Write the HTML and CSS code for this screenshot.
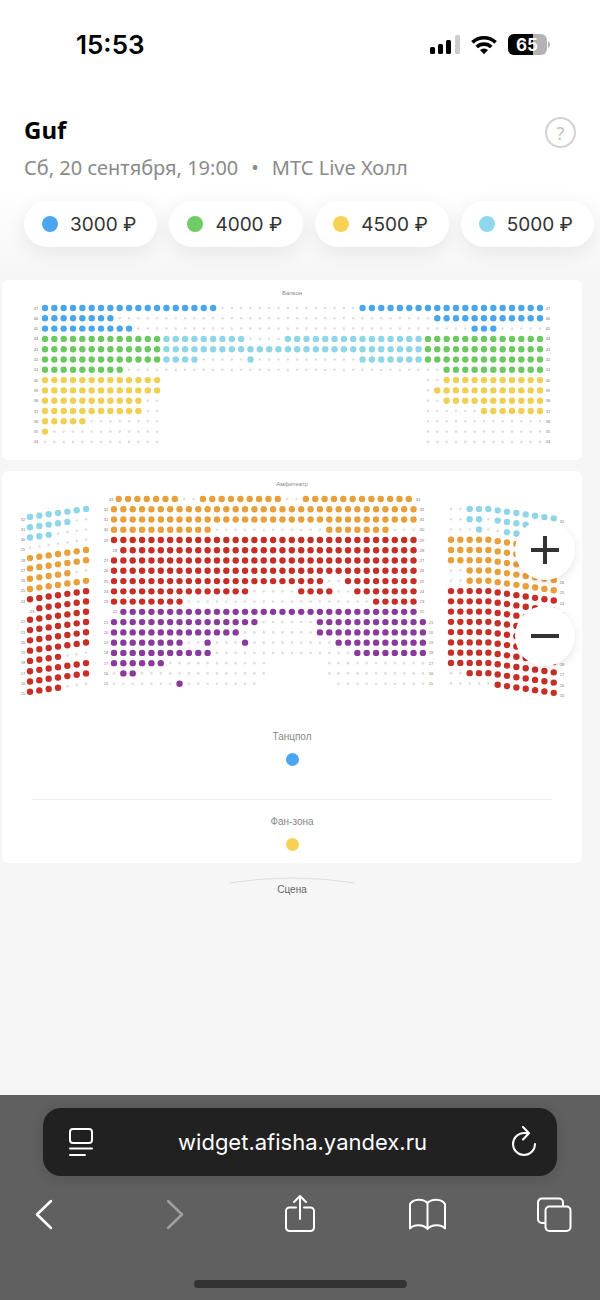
FILE: index.html
```html
<!DOCTYPE html>
<html lang="ru">
<head>
    <meta charset="UTF-8">
    <meta name="viewport" content="width=device-width, initial-scale=1.0">
    <title>Guf — МТС Live Холл</title>
    <link rel="stylesheet" href="styles.css">
</head>
<body>
    <!-- Строка состояния -->
    <div class="status-bar">
        <span class="status-time">15:53</span>
        <div class="status-icons">
            <svg width="30" height="20" viewBox="0 0 30 20" aria-hidden="true">
                <rect x="0" y="12" width="5" height="7" rx="1.5"/>
                <rect x="8" y="9" width="5" height="10" rx="1.5"/>
                <rect x="16" y="5" width="5" height="14" rx="1.5"/>
                <rect x="25" y="0" width="5" height="19" rx="1.5" fill="#ccc"/>
            </svg>
            <svg width="26" height="20" viewBox="0 0 26 20" aria-hidden="true">
                <g fill="none" stroke="#000" stroke-width="3.6">
                    <path d="M1.4 7.4a16.8 16.8 0 0 1 23.2 0"/>
                    <path d="M5.7 12a10.6 10.6 0 0 1 14.6 0"/>
                </g>
                <path d="M13 19.2l-4-4.1a5.8 5.8 0 0 1 8 0z"/>
            </svg>
            <svg width="42" height="22" viewBox="0 0 42 22" role="img" aria-label="Заряд 65%">
                <rect x="0" y="0" width="39" height="21" rx="6" fill="#b3b3b3"/>
                <path d="M6 0h19v21H6a6 6 0 0 1-6-6V6a6 6 0 0 1 6-6z"/>
                <path d="M40 7q2 1.200 2 3.500t-2 3.500z" fill="#b3b3b3"/>
                <text class="battery-text" x="19" y="17" text-anchor="middle">65</text>
            </svg>
        </div>
    </div>

    <!-- Шапка события -->
    <header class="event">
        <div class="event-top">
            <h1>Guf</h1>
            <button class="help-button" type="button" aria-label="Помощь">?</button>
        </div>
        <p class="event-info">Сб, 20 сентября, 19:00<span class="separator">•</span>МТС Live Холл</p>
        <div class="prices">
            <button class="price" type="button"><span class="dot blue"></span>3000 ₽</button>
            <button class="price" type="button"><span class="dot green"></span>4000 ₽</button>
            <button class="price" type="button"><span class="dot yellow"></span>4500 ₽</button>
            <button class="price" type="button"><span class="dot cyan"></span>5000 ₽</button>
        </div>
    </header>

    <!-- Схема зала -->
    <main class="hall">
        <section class="sector">
            <h2>Балкон</h2>
            <svg class="seats" id="balcony" viewBox="0 0 580 162"></svg>
        </section>

        <section class="sector">
            <h2>Амфитеатр</h2>
            <svg class="seats" id="amphitheatre" viewBox="0 0 580 212"></svg>
            <div class="zone dance-floor">
                <h3>Танцпол</h3>
                <span class="zone-dot blue"></span>
            </div>
            <div class="zone fan-zone">
                <h3>Фан-зона</h3>
                <span class="zone-dot yellow"></span>
            </div>
        </section>

        <div class="stage">
            <svg width="128" height="7" viewBox="0 0 128 7" aria-hidden="true">
                <path d="M1 6Q64 -4 127 6" fill="none" stroke="#ddd"/>
            </svg>
            <span>Сцена</span>
        </div>

        <div class="zoom">
            <button type="button" aria-label="Приблизить">
                <svg width="28" height="28" viewBox="0 0 28 28"><path d="M14 0v28M0 14h28"/></svg>
            </button>
            <button type="button" aria-label="Отдалить">
                <svg width="28" height="28" viewBox="0 0 28 28"><path d="M0 14h28"/></svg>
            </button>
        </div>
    </main>

    <!-- Панель браузера -->
    <footer class="browser">
        <div class="address">
            <button type="button" aria-label="Настройки страницы">
                <svg width="26" height="30" viewBox="0 0 26 30">
                    <rect x="2" y="2" width="22" height="14" rx="3"/>
                    <path d="M2 21.500h22M2 28h15"/>
                </svg>
            </button>
            <input type="text" aria-label="Адрес" value="widget.afisha.yandex.ru">
            <button type="button" aria-label="Обновить">
                <svg width="26" height="32" viewBox="0 0 26 32">
                    <path d="M17 7.200Q15 7 13 7a11 11 0 1 0 11 11M12 1l6 6.200L12 13.500"/>
                </svg>
            </button>
        </div>
        <nav class="toolbar">
            <button type="button" aria-label="Назад">
                <svg width="40" height="40" viewBox="0 0 40 40"><path class="thick" d="M27 7L13 20.500l14 13.500"/></svg>
            </button>
            <button type="button" aria-label="Вперёд" disabled>
                <svg width="40" height="40" viewBox="0 0 40 40"><path class="thick" d="M16 7l14 13.500L16 34"/></svg>
            </button>
            <button type="button" aria-label="Поделиться">
                <svg width="40" height="40" viewBox="0 0 40 40">
                    <path d="M16 13.500H9.500A3.500 3.500 0 0 0 6 17v16.500A3.500 3.500 0 0 0 9.500 37h21a3.500 3.500 0 0 0 3.500-3.500V17a3.500 3.500 0 0 0-3.500-3.500H24M20 25V2M14 8l6-6 6 6"/>
                </svg>
            </button>
            <button type="button" aria-label="Закладки">
                <svg width="40" height="40" viewBox="0 0 40 40">
                    <path d="M19.500 9C15.500 4.500 5.500 4.500 2 10v24.500C5.500 30 15.500 30 19.500 35c4-5 14-5 17.500-0.500V10C33.500 4.500 23.500 4.500 19.500 9zM19.500 9v26"/>
                </svg>
            </button>
            <button type="button" aria-label="Вкладки">
                <svg width="40" height="40" viewBox="0 0 40 40">
                    <rect x="9.500" y="12.500" width="25" height="24.500" rx="4"/>
                    <path d="M9 29H6A4 4 0 0 1 2 25V8.500a4 4 0 0 1 4-4h17a4 4 0 0 1 4 4V12"/>
                </svg>
            </button>
        </nav>
        <div class="home-indicator"></div>
    </footer>

    <script src="seats.js"></script>
</body>
</html>
```
FILE: styles.css
```css
/* Общие стили */
* {
    box-sizing: border-box;
}

body {
    display: flex;
    flex-direction: column;
    min-height: 100vh;
    margin: 0;
    font-family: "Noto Sans", "Open Sans", sans-serif;
    background-color: #f6f6f6;
    color: #000;
}

button {
    padding: 0;
    border: none;
    background: none;
    font: inherit;
    cursor: pointer;
}

svg {
    display: block;
}

.blue { background-color: #4aa6f0; }
.green { background-color: #6fcb63; }
.yellow { background-color: #f7d154; }
.cyan { background-color: #8ed8ee; }

/* Строка состояния */
.status-bar {
    display: flex;
    justify-content: space-between;
    align-items: center;
    height: 90px;
    padding: 0 50px 0 76px;
    background-color: #fff;
}

.status-time {
    font: 600 26px/32px Inter, sans-serif;
}

.status-icons {
    display: flex;
    align-items: center;
    gap: 11px;
}

.battery-text {
    font: 700 17px Inter, sans-serif;
    fill: #fff;
}

/* Шапка события */
.event {
    padding: 24px 0 33px 24px;
    background: linear-gradient(#fff 50%, #f6f6f6);
}

.event-top {
    display: flex;
    justify-content: space-between;
    padding-right: 24px;
}

.event h1 {
    margin: 0;
    font-size: 24px;
    font-weight: 700;
    line-height: 32px;
}

.help-button {
    width: 31px;
    height: 31px;
    margin-top: 3px;
    border: 2px solid #d2d2d2;
    border-radius: 50%;
    color: #c4c4c4;
    font-size: 18px;
    line-height: 24px;
}

.event-info {
    margin: 6px 0 19px;
    color: #8a8a8a;
    font-size: 20px;
    line-height: 28px;
}

.separator {
    margin: 0 13px;
}

.prices {
    display: flex;
    gap: 12px;
}

.price {
    display: flex;
    align-items: center;
    flex: none;
    height: 46px;
    padding: 0 21px 0 18px;
    border-radius: 23px;
    background-color: #fff;
    box-shadow: 0 6px 20px rgba(0, 0, 0, 0.08);
    color: #333;
    font-family: Inter, sans-serif;
    font-size: 19px;
}

.dot {
    width: 16px;
    height: 16px;
    margin-right: 12px;
    border-radius: 50%;
}

/* Схема зала */
.hall {
    position: relative;
    flex: 1;
    padding: 0 18px 0 2px;
    font-family: "Liberation Sans", Arial, sans-serif;
}

.sector {
    margin-bottom: 11px;
    padding-top: 8px;
    border-radius: 6px;
    background-color: #fff;
}

.sector h2 {
    margin: 0;
    color: #888;
    font-size: 6px;
    font-weight: normal;
    line-height: 10px;
    text-align: center;
}

.seats {
    width: 100%;
}

.row-number {
    fill: #777;
    font-size: 4px;
    text-anchor: middle;
}

.zone {
    display: flex;
    flex-direction: column;
    align-items: center;
    gap: 10px;
    margin: 0 30px;
}

.zone h3 {
    margin: 0;
    color: #888;
    font-size: 10px;
    font-weight: normal;
    line-height: 12px;
}

.zone-dot {
    width: 13px;
    height: 13px;
    border-radius: 50%;
}

.dance-floor {
    padding: 30px 0 33px;
    border-bottom: 1px solid #eee;
}

.fan-zone {
    padding: 16px 0 12px;
}

.stage {
    display: flex;
    flex-direction: column;
    align-items: center;
    padding-top: 3px;
    color: #666;
    font-size: 10px;
    line-height: 12px;
}

/* Кнопки масштаба поверх схемы */
.zoom {
    position: absolute;
    top: 240px;
    right: 25px;
    display: flex;
    flex-direction: column;
    gap: 26px;
}

.zoom button {
    display: flex;
    align-items: center;
    justify-content: center;
    width: 60px;
    height: 60px;
    border-radius: 50%;
    background-color: #fff;
    box-shadow: 0 3px 10px rgba(0, 0, 0, 0.1);
}

.zoom path {
    stroke: #333;
    stroke-width: 4;
}

/* Панель браузера */
.browser {
    padding: 13px 24px 12px;
    background-color: #606060;
}

.browser svg {
    fill: none;
    stroke: #fff;
    stroke-width: 2;
    stroke-linecap: round;
    stroke-linejoin: round;
}

.address {
    display: flex;
    align-items: center;
    height: 68px;
    margin: 0 19px;
    padding: 0 20px 0 25px;
    border-radius: 18px;
    background-color: #212121;
    box-shadow: 0 2px 14px rgba(0, 0, 0, 0.15);
}

.address input {
    flex: 1;
    min-width: 0;
    padding: 0;
    border: none;
    background: none;
    color: #fff;
    font: 22px/28px Inter, sans-serif;
    text-align: center;
}

.toolbar {
    display: flex;
    justify-content: space-between;
    margin: 18px 0 46px;
}

.toolbar button:disabled {
    opacity: 0.4;
}

.browser .thick {
    stroke-width: 2.5;
}

.home-indicator {
    width: 213px;
    height: 8px;
    margin: 0 auto;
    border-radius: 4px;
    background-color: #333;
}
```
FILE: seats.js
```js
const SVG_NS = 'http://www.w3.org/2000/svg';

const COLORS = {
    b: '#4aa6ea',
    g: '#6cc860',
    c: '#8fd6e8',
    y: '#f0cf55',
    o: '#e8a03c',
    r: '#c62f27',
    p: '#8a3a9c'
};

// Ряды: буква - цвет цены, "." - занятые места, "_" - пропуск, число - количество
const balcony = {
    x: 43, y: 10, step: 9.34, rowStep: 10.3, first: 47,
    left: () => 34,
    right: () => 546,
    rows: [
        'b19 .15 b20',
        'b8 .34 b12',
        'b10 .36 b3 .5',
        'g13 c9 .4 c15 g13',
        'g13 c28 g13',
        'g13 c4 .5 c1 .11 c7 g13',
        'g9 .34 g11',
        'y13 _28 .2 y11',
        'y13 _28 .1 y12',
        'y11 .2 _28 .2 y11',
        'y11 .2 _28 .6 y7',
        'y5 .8 _28 .13',
        'y1 .12 _28 .13',
        '.13 _28 .13'
    ]
};

const center = {
    x: 112, y: 10, step: 9.36, rowStep: 10.26, first: 33,
    left: n => n === 33 ? 109 : (n === 28 || n === 22) ? 113 : 104,
    right: n => n === 33 ? 416 : n > 21 ? 420 : 429,
    rows: [
        '_0.5 o7 .2 o9 .2 o12',
        'o33',
        'o33',
        'o11 .12 o7 .3',
        'r33',
        '_1 r32',
        'r33',
        'r33',
        'r23 .2 r8',
        'r15 .5 r4 .2 r7',
        'r8 .20 r5',
        '_1 p32',
        'p16 .6 p12',
        'p14 .8 p12',
        'p8 .2 p1 .3 p1 .9 p10',
        'p11 .15 p8',
        'p6 .11 _6 .11',
        '.1 p2 .14 _6 .11',
        '.7 p1 .8 _8 .10'
    ]
};

const leftSide = {
    x: 28, y: 28, step: 9.34, rowStep: 10.28, first: 32,
    shift: col => -1.35 * col,
    left: n => n === 23 ? 30 : 21,
    leftShift: 2,
    rows: [
        'c7', 'c5 .2', 'c3 .4', '.7', 'o7', 'o7', 'o5 .2', 'o7', 'r7',
        '_1 r6', 'r7', 'r7', 'r7', 'r7', 'r4 .3', 'r7', 'r7', 'r4 .3'
    ]
};

const rightSide = {
    x: 449, y: 20, step: 9.34, rowStep: 10.26, first: 32,
    shift: col => Math.max(0, col - 4) * 1.35,
    right: () => 560,
    rightShift: 12,
    rows: [
        '.2 c10', '.2 c2 .1 c7', '.3 c1 .2 c6', 'o12', 'o12', 'o12',
        '.2 o10', '.2 o10', 'r12', 'r12', 'r12', 'r12', 'r12', 'r12',
        'r12', 'r12', '.2 r10', '.5 r7'
    ]
};

function addSeat(svg, x, y, type) {
    const seat = document.createElementNS(SVG_NS, 'circle');
    seat.setAttribute('cx', x);
    seat.setAttribute('cy', y);
    seat.setAttribute('r', type === '.' ? 1.3 : 3.2);
    seat.setAttribute('fill', COLORS[type] || '#dedede');
    svg.appendChild(seat);
}

function addRowNumber(svg, x, y, number) {
    const text = document.createElementNS(SVG_NS, 'text');
    text.setAttribute('class', 'row-number');
    text.setAttribute('x', x);
    text.setAttribute('y', y + 1.5);
    text.textContent = number;
    svg.appendChild(text);
}

function drawBlock(id, block) {
    const svg = document.getElementById(id);
    block.rows.forEach((row, i) => {
        const number = block.first - i;
        const y = block.y + i * block.rowStep;
        let col = 0;

        row.split(' ').forEach(part => {
            const type = part[0];
            const count = Number(part.slice(1));
            if (type !== '_') {
                for (let k = col; k < col + count; k++) {
                    addSeat(svg, block.x + k * block.step, y + (block.shift ? block.shift(k) : 0), type);
                }
            }
            col += count;
        });

        if (block.left) {
            addRowNumber(svg, block.left(number), y + (block.leftShift || 0), number);
        }
        if (block.right) {
            addRowNumber(svg, block.right(number), y + (block.rightShift || 0), number);
        }
    });
}

drawBlock('balcony', balcony);
drawBlock('amphitheatre', leftSide);
drawBlock('amphitheatre', center);
drawBlock('amphitheatre', rightSide);
```
